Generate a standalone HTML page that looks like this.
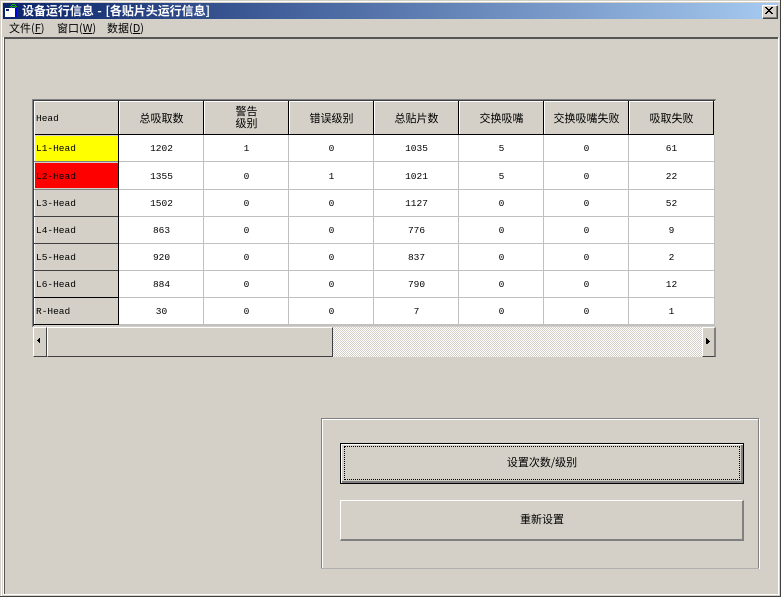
<!DOCTYPE html>
<html><head><meta charset="utf-8">
<style>
html,body{margin:0;padding:0;width:781px;height:597px;overflow:hidden;background:#d4d0c8}
#p{position:absolute;left:0;top:0;width:781px;height:597px;background:#d4d0c8;overflow:hidden;font-family:"Liberation Sans","WenQuanYi Zen Hei","Noto Sans CJK SC",sans-serif;color:#000}
#p div{position:absolute}
.t{font-size:11px;line-height:14px;white-space:nowrap;text-align:center;font-family:"WenQuanYi Zen Hei","Noto Sans CJK SC",sans-serif}
.n{font-size:9.5px;line-height:12px;white-space:nowrap;text-align:center;font-family:"Liberation Mono",monospace;width:85px}
.h{font-size:9.5px;line-height:12px;white-space:nowrap;font-family:"Liberation Mono",monospace;left:36px;width:80px}
.m{font-size:11px;line-height:14px;white-space:nowrap;top:21px;font-family:"WenQuanYi Zen Hei","Noto Sans CJK SC",sans-serif}
u{text-decoration:underline}
</style></head><body>
<div id="p">
<!-- window frame -->
<div style="left:1px;top:1px;width:779px;height:1px;background:#fff"></div>
<div style="left:1px;top:1px;width:1px;height:595px;background:#fff"></div>
<div style="left:780px;top:0;width:1px;height:597px;background:#404040"></div>
<div style="left:0;top:596px;width:781px;height:1px;background:#404040"></div>
<!-- title -->
<div style="left:3px;top:3px;width:775px;height:16px;background:linear-gradient(90deg,#0a246a,#a6caf0)"></div>
<svg style="position:absolute;left:0;top:0" width="22" height="20" shape-rendering="crispEdges">
<rect x="5" y="8" width="10" height="9" fill="#fff"/>
<rect x="15" y="8" width="2" height="9" fill="#0000e0"/>
<rect x="6" y="9" width="3" height="2" fill="#0a246a"/>
<path d="M9 7h1v-1h1v-1h1v-1h3v1h1v1h1v1h-1v-1h-1v-1h-3v1h-1v1h-1zM11 8h1v-1h3v1h1v-1h-1v-1h-3v1h-1z" fill="#00c000"/>
</svg>
<div class="t" style="left:22px;top:4px;color:#fff;font-size:12px;font-weight:bold;text-align:left;word-spacing:1px;letter-spacing:-0.05px">设备运行信息 - [各贴片头运行信息]</div>
<!-- close -->
<div style="left:762px;top:5px;width:15px;height:13px;background:#d4d0c8;border-top:1px solid #fff;border-left:1px solid #fff;box-sizing:border-box;box-shadow:inset -1px -1px 0 #808080,1px 1px 0 #404040"></div>
<svg style="position:absolute;left:765px;top:7px" width="9" height="8" shape-rendering="crispEdges"><path d="M0 0h2v1h1v1h2v-1h1v-1h2v1h-1v1h-1v1h-1v1h1v1h1v1h1v1h-2v-1h-1v-1h-2v1h-1v1h-2v-1h1v-1h1v-1h1v-1h-1v-1h-1v-1h-1z" fill="#000"/></svg>
<!-- menu -->
<div class="m" style="left:9px">文件(<u>F</u>)</div>
<div class="m" style="left:57px">窗口(<u>W</u>)</div>
<div class="m" style="left:107px">数据(<u>D</u>)</div>
<!-- client sunken -->
<div style="left:4px;top:37px;width:774px;height:2px;background:#555"></div>
<div style="left:4px;top:37px;width:1px;height:557px;background:#555"></div>
<div style="left:3px;top:37px;width:1px;height:558px;background:#fff"></div>
<div style="left:778px;top:38px;width:1px;height:557px;background:#fff"></div>
<div style="left:3px;top:594px;width:775px;height:1px;background:#fff"></div>
<!-- grid sunken -->
<div style="left:32px;top:99px;width:684px;height:1px;background:#808080"></div>
<div style="left:32px;top:99px;width:1px;height:228px;background:#808080"></div>
<div style="left:33px;top:100px;width:682px;height:1px;background:#404040"></div>
<div style="left:33px;top:100px;width:1px;height:226px;background:#404040"></div>
<!-- grid bodies -->
<div style="left:34px;top:101px;width:681px;height:224px;background:#fff"></div>
<div style="left:34px;top:101px;width:681px;height:34px;background:#d4d0c8"></div>
<div style="left:34px;top:135px;width:85px;height:190px;background:#d4d0c8"></div>
<div style="left:35px;top:136px;width:83px;height:25px;background:#ffff00"></div>
<div style="left:35px;top:163px;width:83px;height:25px;background:#ff0000"></div>
<!-- header lines -->
<div style="left:34px;top:101px;width:681px;height:1px;background:#fff"></div>
<div style="left:34px;top:134px;width:680px;height:1px;background:#000"></div>
<div style="left:34px;top:101px;width:1px;height:224px;background:#fff"></div>
<!-- row lines -->
<div style="left:119px;top:161px;width:596px;height:1px;background:#c0c0c0"></div>
<div style="left:119px;top:189px;width:596px;height:1px;background:#c0c0c0"></div>
<div style="left:119px;top:216px;width:596px;height:1px;background:#c0c0c0"></div>
<div style="left:119px;top:243px;width:596px;height:1px;background:#c0c0c0"></div>
<div style="left:119px;top:270px;width:596px;height:1px;background:#c0c0c0"></div>
<div style="left:119px;top:297px;width:596px;height:1px;background:#c0c0c0"></div>
<div style="left:119px;top:324px;width:596px;height:2px;background:#c0c0c0"></div>
<div style="left:34px;top:161px;width:85px;height:1px;background:#808080"></div>
<div style="left:34px;top:189px;width:85px;height:1px;background:#808080"></div>
<div style="left:34px;top:216px;width:85px;height:1px;background:#404040"></div>
<div style="left:34px;top:243px;width:85px;height:1px;background:#404040"></div>
<div style="left:34px;top:270px;width:85px;height:1px;background:#404040"></div>
<div style="left:34px;top:297px;width:85px;height:1px;background:#000"></div>
<div style="left:34px;top:324px;width:85px;height:1px;background:#000"></div>
<!-- col lines -->
<div style="left:118px;top:101px;width:1px;height:224px;background:#000"></div>
<div style="left:203px;top:135px;width:1px;height:190px;background:#c0c0c0"></div>
<div style="left:288px;top:135px;width:1px;height:190px;background:#c0c0c0"></div>
<div style="left:373px;top:135px;width:1px;height:190px;background:#c0c0c0"></div>
<div style="left:458px;top:135px;width:1px;height:190px;background:#c0c0c0"></div>
<div style="left:543px;top:135px;width:1px;height:190px;background:#c0c0c0"></div>
<div style="left:628px;top:135px;width:1px;height:190px;background:#c0c0c0"></div>
<div style="left:714px;top:135px;width:1px;height:191px;background:#c0c0c0"></div>
<div style="left:203px;top:101px;width:1px;height:34px;background:#000"></div>
<div style="left:288px;top:101px;width:1px;height:34px;background:#000"></div>
<div style="left:373px;top:101px;width:1px;height:34px;background:#000"></div>
<div style="left:458px;top:101px;width:1px;height:34px;background:#000"></div>
<div style="left:543px;top:101px;width:1px;height:34px;background:#000"></div>
<div style="left:628px;top:101px;width:1px;height:34px;background:#000"></div>
<div style="left:713px;top:101px;width:1px;height:34px;background:#000"></div>
<div style="left:119px;top:102px;width:1px;height:32px;background:#fff"></div>
<div style="left:204px;top:102px;width:1px;height:32px;background:#fff"></div>
<div style="left:289px;top:102px;width:1px;height:32px;background:#fff"></div>
<div style="left:374px;top:102px;width:1px;height:32px;background:#fff"></div>
<div style="left:459px;top:102px;width:1px;height:32px;background:#fff"></div>
<div style="left:544px;top:102px;width:1px;height:32px;background:#fff"></div>
<div style="left:629px;top:102px;width:1px;height:32px;background:#fff"></div>
<!-- header text -->
<div class="h" style="top:113px">Head</div>
<div class="t" style="left:119px;top:111px;width:85px">总吸取数</div>
<div class="t" style="left:204px;top:105px;width:85px;line-height:12px">警告<br>级别</div>
<div class="t" style="left:289px;top:111px;width:85px">错误级别</div>
<div class="t" style="left:374px;top:111px;width:85px">总贴片数</div>
<div class="t" style="left:459px;top:111px;width:85px">交换吸嘴</div>
<div class="t" style="left:544px;top:111px;width:85px">交换吸嘴失败</div>
<div class="t" style="left:629px;top:111px;width:85px">吸取失败</div>
<!-- row heads -->
<div class="h" style="top:143px">L1-Head</div>
<div class="h" style="top:171px">L2-Head</div>
<div class="h" style="top:198px">L3-Head</div>
<div class="h" style="top:225px">L4-Head</div>
<div class="h" style="top:252px">L5-Head</div>
<div class="h" style="top:279px">L6-Head</div>
<div class="h" style="top:306px">R-Head</div>
<!-- data -->
<div class="n" style="left:119px;top:143px">1202</div><div class="n" style="left:204px;top:143px">1</div><div class="n" style="left:289px;top:143px">0</div><div class="n" style="left:374px;top:143px">1035</div><div class="n" style="left:459px;top:143px">5</div><div class="n" style="left:544px;top:143px">0</div><div class="n" style="left:629px;top:143px">61</div>
<div class="n" style="left:119px;top:171px">1355</div><div class="n" style="left:204px;top:171px">0</div><div class="n" style="left:289px;top:171px">1</div><div class="n" style="left:374px;top:171px">1021</div><div class="n" style="left:459px;top:171px">5</div><div class="n" style="left:544px;top:171px">0</div><div class="n" style="left:629px;top:171px">22</div>
<div class="n" style="left:119px;top:198px">1502</div><div class="n" style="left:204px;top:198px">0</div><div class="n" style="left:289px;top:198px">0</div><div class="n" style="left:374px;top:198px">1127</div><div class="n" style="left:459px;top:198px">0</div><div class="n" style="left:544px;top:198px">0</div><div class="n" style="left:629px;top:198px">52</div>
<div class="n" style="left:119px;top:225px">863</div><div class="n" style="left:204px;top:225px">0</div><div class="n" style="left:289px;top:225px">0</div><div class="n" style="left:374px;top:225px">776</div><div class="n" style="left:459px;top:225px">0</div><div class="n" style="left:544px;top:225px">0</div><div class="n" style="left:629px;top:225px">9</div>
<div class="n" style="left:119px;top:252px">920</div><div class="n" style="left:204px;top:252px">0</div><div class="n" style="left:289px;top:252px">0</div><div class="n" style="left:374px;top:252px">837</div><div class="n" style="left:459px;top:252px">0</div><div class="n" style="left:544px;top:252px">0</div><div class="n" style="left:629px;top:252px">2</div>
<div class="n" style="left:119px;top:279px">884</div><div class="n" style="left:204px;top:279px">0</div><div class="n" style="left:289px;top:279px">0</div><div class="n" style="left:374px;top:279px">790</div><div class="n" style="left:459px;top:279px">0</div><div class="n" style="left:544px;top:279px">0</div><div class="n" style="left:629px;top:279px">12</div>
<div class="n" style="left:119px;top:306px">30</div><div class="n" style="left:204px;top:306px">0</div><div class="n" style="left:289px;top:306px">0</div><div class="n" style="left:374px;top:306px">7</div><div class="n" style="left:459px;top:306px">0</div><div class="n" style="left:544px;top:306px">0</div><div class="n" style="left:629px;top:306px">1</div>
<!-- scrollbar -->
<svg style="position:absolute;left:333px;top:327px" width="369" height="30" shape-rendering="crispEdges"><defs><pattern id="d" width="2" height="2" patternUnits="userSpaceOnUse"><rect width="2" height="2" fill="#fff"/><rect width="1" height="1" fill="#d4d0c8"/><rect x="1" y="1" width="1" height="1" fill="#d4d0c8"/></pattern></defs><rect width="369" height="30" fill="url(#d)"/></svg>
<div style="left:33px;top:327px;width:14px;height:30px;box-sizing:border-box;background:#d4d0c8;border-top:1px solid #fff;border-left:1px solid #fff;border-right:1px solid #404040;border-bottom:1px solid #404040"></div>
<div style="left:47px;top:327px;width:286px;height:30px;box-sizing:border-box;background:#d4d0c8;border-top:1px solid #fff;border-left:1px solid #fff;border-right:1px solid #404040;border-bottom:1px solid #404040"></div>
<div style="left:702px;top:327px;width:14px;height:30px;box-sizing:border-box;background:#d4d0c8;border-top:1px solid #fff;border-left:1px solid #fff;border-right:2px solid #808080;border-bottom:1px solid #404040"></div>
<svg style="position:absolute;left:37px;top:338px" width="3" height="5" shape-rendering="crispEdges"><path d="M2 0h1v5h-1v-1h-1v-1h-1v-1h1v-1h1z" fill="#000"/></svg>
<svg style="position:absolute;left:706px;top:338px" width="4" height="7" shape-rendering="crispEdges"><path d="M0 0h1v1h1v1h1v1h1v1h-1v1h-1v1h-2z" fill="#000"/></svg>
<!-- group panel -->
<div style="left:321px;top:418px;width:438px;height:1px;background:#808080"></div>
<div style="left:322px;top:419px;width:438px;height:1px;background:#fff"></div>
<div style="left:321px;top:418px;width:1px;height:151px;background:#808080"></div>
<div style="left:322px;top:419px;width:1px;height:149px;background:#fff"></div>
<div style="left:758px;top:418px;width:1px;height:151px;background:#808080"></div>
<div style="left:759px;top:419px;width:1px;height:150px;background:#fff"></div>
<div style="left:321px;top:568px;width:438px;height:1px;background:#b0b0b0"></div>
<!-- button 1 -->
<div style="left:340px;top:443px;width:404px;height:41px;box-sizing:border-box;border:1px solid #000;background:#d4d0c8;box-shadow:inset 1px 1px 0 #fff,inset -2px -2px 0 #808080"></div>
<div style="left:344px;top:446px;width:396px;height:34px;box-sizing:border-box;border:1px dotted #000"></div>
<div class="t" style="left:340px;top:455px;width:404px">设置次数/级别</div>
<!-- button 2 -->
<div style="left:340px;top:500px;width:404px;height:41px;box-sizing:border-box;background:#d4d0c8;border-top:1px solid #fff;border-left:1px solid #fff;border-right:2px solid #808080;border-bottom:2px solid #808080"></div>
<div class="t" style="left:340px;top:512px;width:404px">重新设置</div>
</div>
</body></html>
